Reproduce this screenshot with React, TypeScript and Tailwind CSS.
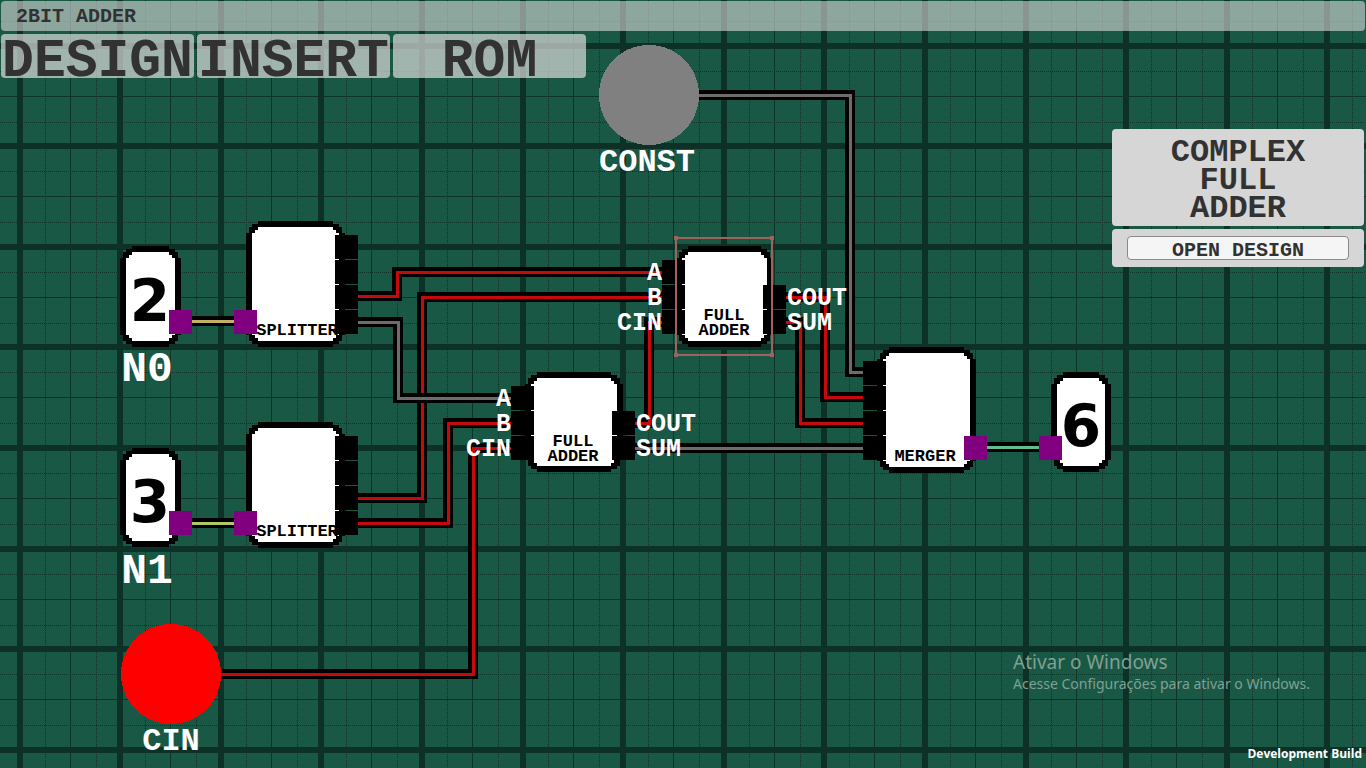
type Wire = { points: string; color: string };
type Chip = { x: number; y: number; w: number; h: number };
type Pin = { x: number; y: number; bus?: boolean };
type Label = {
  x: number;
  y: number;
  text: string;
  className: string;
  anchor?: "start" | "middle" | "end";
};

const RED = "#c40a0c";
const GRAY = "#6f6b6b";

const wires: Wire[] = [
  { points: "357,296 397,296 397,272 662,272", color: RED },
  { points: "357,498 422,498 422,297 662,297", color: RED },
  { points: "357,322 398,322 398,398 512,398", color: GRAY },
  { points: "357,523 448,523 448,423 512,423", color: RED },
  { points: "221,674 473,674 473,448 512,448", color: RED },
  { points: "635,423 649,423 649,322 662,322", color: RED },
  { points: "635,448 863,448", color: GRAY },
  { points: "786,297 825,297 825,397 863,397", color: RED },
  { points: "786,322 800,322 800,423 863,423", color: RED },
  { points: "699,95 850,95 850,372 863,372", color: GRAY },
  { points: "192,321 234,321", color: "#c4b062" },
  { points: "192,523 234,523", color: "#b0c764" },
  { points: "987,447 1040,447", color: "#62bd8c" },
];

const chips: Chip[] = [
  { x: 120, y: 246, w: 61, h: 101 },
  { x: 120, y: 448, w: 61, h: 99 },
  { x: 246, y: 221, w: 99, h: 126 },
  { x: 246, y: 422, w: 99, h: 126 },
  { x: 525, y: 372, w: 98, h: 100 },
  { x: 676, y: 246, w: 97, h: 101 },
  { x: 877, y: 347, w: 99, h: 126 },
  { x: 1051, y: 372, w: 60, h: 100 },
];

const pins: Pin[] = [
  ...[235, 260, 285, 310].map((y) => ({ x: 335, y })),
  ...[436, 461, 486, 511].map((y) => ({ x: 335, y })),
  ...[386, 411, 436].map((y) => ({ x: 511, y })),
  ...[411, 436].map((y) => ({ x: 612, y })),
  ...[260, 285, 310].map((y) => ({ x: 662, y })),
  ...[285, 310].map((y) => ({ x: 763, y })),
  ...[361, 386, 411, 436].map((y) => ({ x: 863, y })),
  { x: 169, y: 310, bus: true },
  { x: 234, y: 310, bus: true },
  { x: 169, y: 511, bus: true },
  { x: 234, y: 511, bus: true },
  { x: 964, y: 436, bus: true },
  { x: 1039, y: 436, bus: true },
];

const PIN_TEXT = "fill-white text-[25px]";
const CHIP_TEXT = "fill-black text-[17px]";
const NODE_TEXT = "fill-white text-[32px]";
const NUMBER_TEXT = "fill-white text-[43px]";
const DIGIT_TEXT = "fill-black text-[58px] font-['DejaVu_Sans',sans-serif]";

const chipLabels: Label[] = [
  { x: 150, y: 321, text: "2", className: DIGIT_TEXT, anchor: "middle" },
  { x: 150, y: 522, text: "3", className: DIGIT_TEXT, anchor: "middle" },
  { x: 1081, y: 446, text: "6", className: DIGIT_TEXT, anchor: "middle" },
  { x: 297, y: 335, text: "SPLITTER", className: CHIP_TEXT, anchor: "middle" },
  { x: 297, y: 536, text: "SPLITTER", className: CHIP_TEXT, anchor: "middle" },
  { x: 573, y: 446, text: "FULL", className: CHIP_TEXT, anchor: "middle" },
  { x: 573, y: 461, text: "ADDER", className: CHIP_TEXT, anchor: "middle" },
  { x: 724, y: 320, text: "FULL", className: CHIP_TEXT, anchor: "middle" },
  { x: 724, y: 335, text: "ADDER", className: CHIP_TEXT, anchor: "middle" },
  { x: 925, y: 461, text: "MERGER", className: CHIP_TEXT, anchor: "middle" },
];

const labels: Label[] = [
  { x: 662, y: 280, text: "A", className: PIN_TEXT, anchor: "end" },
  { x: 662, y: 305, text: "B", className: PIN_TEXT, anchor: "end" },
  { x: 662, y: 330, text: "CIN", className: PIN_TEXT, anchor: "end" },
  { x: 511, y: 406, text: "A", className: PIN_TEXT, anchor: "end" },
  { x: 511, y: 431, text: "B", className: PIN_TEXT, anchor: "end" },
  { x: 511, y: 456, text: "CIN", className: PIN_TEXT, anchor: "end" },
  { x: 787, y: 305, text: "COUT", className: PIN_TEXT },
  { x: 787, y: 330, text: "SUM", className: PIN_TEXT },
  { x: 636, y: 431, text: "COUT", className: PIN_TEXT },
  { x: 636, y: 456, text: "SUM", className: PIN_TEXT },
  { x: 647, y: 171, text: "CONST", className: NODE_TEXT, anchor: "middle" },
  { x: 171, y: 750, text: "CIN", className: NODE_TEXT, anchor: "middle" },
  { x: 147, y: 381, text: "N0", className: NUMBER_TEXT, anchor: "middle" },
  { x: 147, y: 583, text: "N1", className: NUMBER_TEXT, anchor: "middle" },
];

// Rectangle whose corners are cut in square steps of 3px
function steppedRect(x: number, y: number, w: number, h: number, steps: number[][]) {
  const back = [...steps].reverse();
  const corners = [
    ...steps.map(([a, b]) => [x + a, y + b]),
    ...back.map(([a, b]) => [x + w - a, y + b]),
    ...steps.map(([a, b]) => [x + w - a, y + h - b]),
    ...back.map(([a, b]) => [x + a, y + h - b]),
  ];
  return corners.map((p) => p.join(",")).join(" ");
}

const OUTER = [[0, 12], [3, 12], [3, 6], [6, 6], [6, 3], [12, 3], [12, 0]];
const INNER = [[0, 6], [3, 6], [3, 3], [6, 3], [6, 0]];

// Grid: one heavy line per cell, a thin one halfway and dotted ones at the quarters
const CELL = 100.6;
const CELLS = Array.from({ length: 40 }, (_, i) => i - 1);

function gridPath(offset: number) {
  return CELLS.map((i) => {
    const x = Math.floor(20 + i * CELL + offset);
    const y = Math.floor(46 + i * CELL + offset);
    return `M${x} 0V4000M0 ${y}H4000`;
  }).join("");
}

function ChipBody({ x, y, w, h }: Chip) {
  return (
    <g>
      <polygon points={steppedRect(x, y, w, h, OUTER)} fill="#000" />
      <polygon points={steppedRect(x + 6, y + 6, w - 12, h - 12, INNER)} fill="#fff" />
    </g>
  );
}

function Labels({ items }: { items: Label[] }) {
  return (
    <g className="font-['Liberation_Mono',monospace] font-bold">
      {items.map((l, i) => (
        <text key={i} x={l.x} y={l.y} textAnchor={l.anchor} className={l.className}>
          {l.text}
        </text>
      ))}
    </g>
  );
}

function Board() {
  return (
    <svg className="absolute inset-0 h-full w-full" shapeRendering="crispEdges">
      <g stroke="#0c3429">
        <path d={gridPath(25)} strokeDasharray="1 1" />
        <path d={gridPath(76)} strokeDasharray="1 1" />
        <path d={gridPath(50)} />
      </g>
      <path d={gridPath(0)} stroke="#0d3027" strokeWidth="6" />

      {wires.map((w) => (
        <g key={w.points} fill="none">
          <polyline points={w.points} stroke="#000" strokeWidth="10" />
          <polyline points={w.points} stroke={w.color} strokeWidth="3" />
        </g>
      ))}

      {chips.map((c) => (
        <ChipBody key={`${c.x}-${c.y}`} {...c} />
      ))}
      <Labels items={chipLabels} />
      {pins.map((p) => (
        <rect
          key={`${p.x}-${p.y}`}
          x={p.x}
          y={p.y}
          width="23"
          height="24"
          fill={p.bus ? "#800080" : "#000"}
        />
      ))}

      <circle cx="649" cy="95" r="50" fill="#808080" />
      <circle cx="171" cy="674" r="50" fill="#f00" />
      <Labels items={labels} />

      {/* Selection frame */}
      <g fill="none" stroke="#a0625c">
        <rect x="676" y="238" width="96" height="117" strokeWidth="2" />
        <path d="M674.5 236.5h3v3h-3zM770.5 236.5h3v3h-3zM674.5 353.5h3v3h-3zM770.5 353.5h3v3h-3z" />
      </g>
    </svg>
  );
}

export default function App() {
  return (
    <div className="relative flex min-h-screen flex-col overflow-hidden bg-[#195844] font-['Liberation_Mono',monospace] font-bold text-[#323232]">
      <Board />

      <header className="relative p-px">
        <h1 className="h-[30px] rounded-sm bg-[#dadada]/60 px-[15px] pt-0.5 text-xl leading-7">
          2BIT ADDER
        </h1>
        <nav className="mt-[3px] flex gap-[3px] text-[53px]">
          {["DESIGN", "INSERT", "ROM"].map((name) => (
            <button
              key={name}
              className="flex h-11 w-[193px] items-center justify-center rounded-sm bg-[#dcdcdc]/70 pt-3 leading-none"
            >
              {name}
            </button>
          ))}
        </nav>
      </header>

      <aside className="relative mt-[50px] mr-0.5 flex w-[252px] flex-col gap-[3px] self-end text-center">
        <h2 className="rounded-sm bg-[#d6d6d6] px-14 pt-2.5 pb-[3px] text-[32px] leading-7">
          COMPLEX FULL ADDER
        </h2>
        <div className="rounded-sm bg-[#d6d6d6] px-[15px] py-[7px]">
          <button className="block h-6 w-full rounded-sm border border-[#8a8a8a] bg-[#f5f5f5] pt-1 text-xl leading-none">
            OPEN DESIGN
          </button>
        </div>
      </aside>

      <footer className="relative mt-auto flex flex-col items-end">
        <div className="mr-14 mb-[50px] font-['Noto_Sans',sans-serif] font-normal text-[#7fa094]">
          <p className="text-[19px] leading-6">Ativar o Windows</p>
          <p className="text-sm leading-5">Acesse Configurações para ativar o Windows.</p>
        </div>
        <p className="mr-1 mb-1 font-['Open_Sans',sans-serif] text-xs leading-5 text-white">
          Development Build
        </p>
      </footer>
    </div>
  );
}
